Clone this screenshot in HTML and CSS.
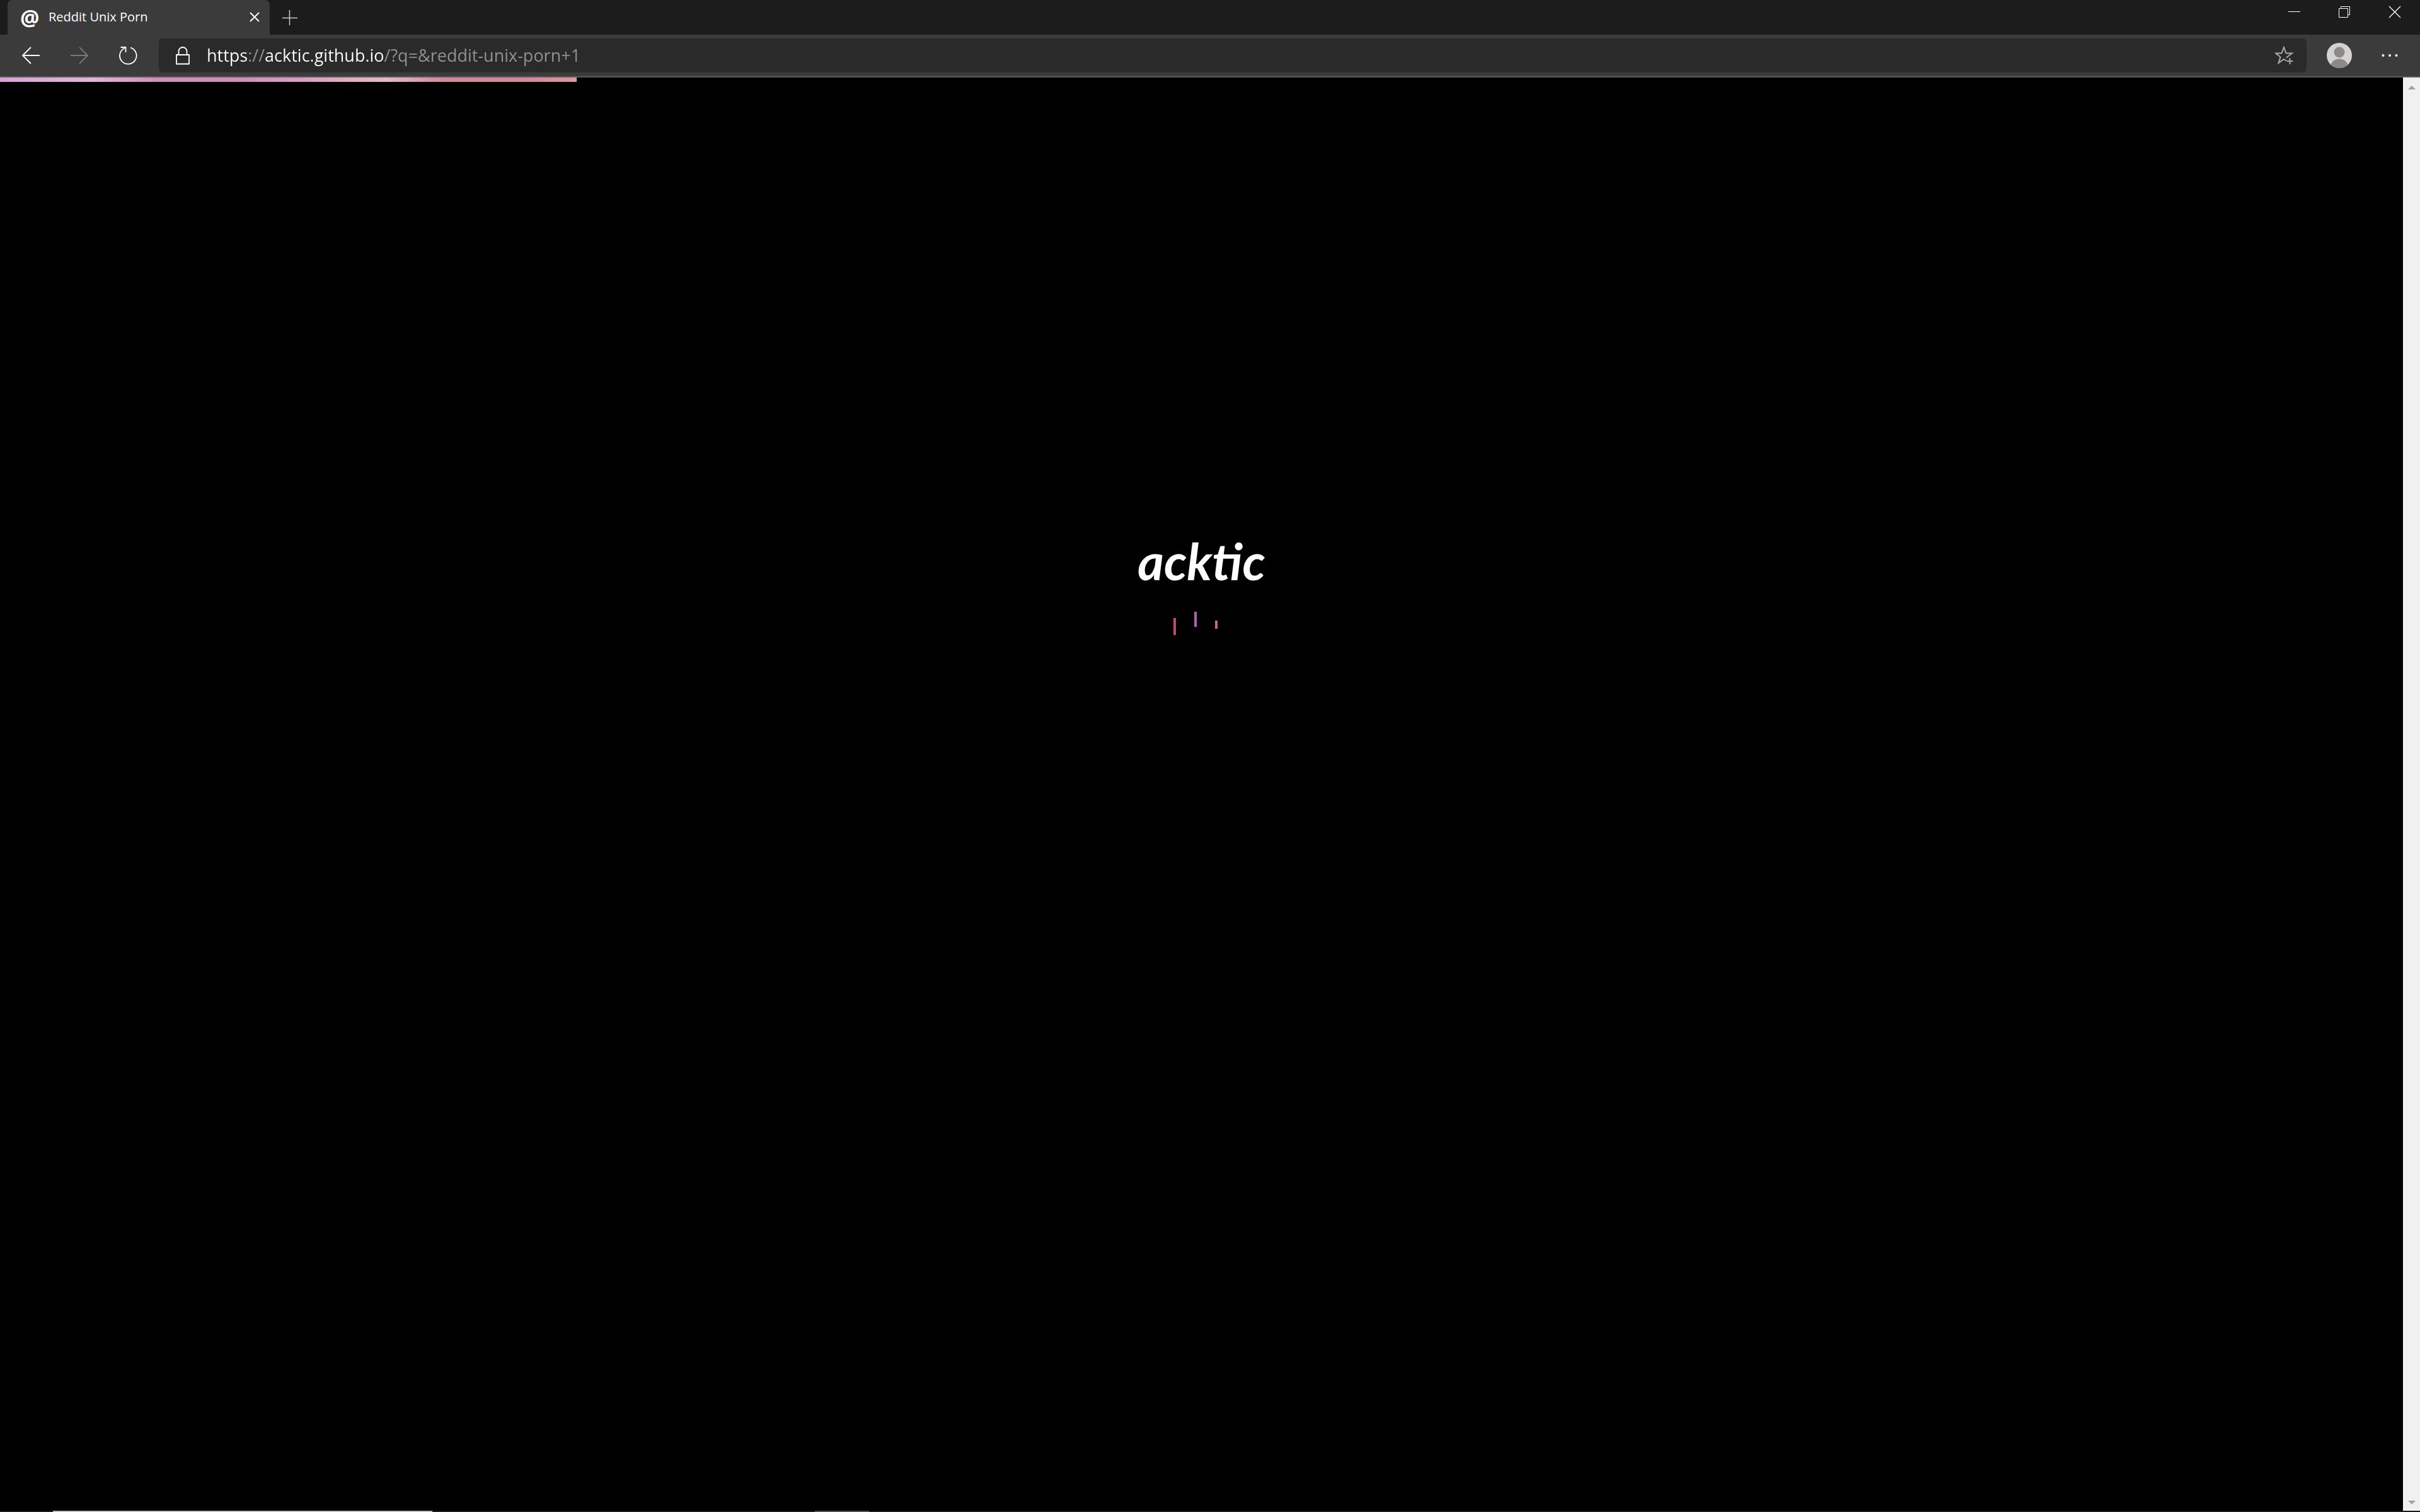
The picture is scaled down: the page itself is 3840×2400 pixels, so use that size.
FILE: index.html
```html
<!DOCTYPE html>
<html lang="en">
<head>
<meta charset="utf-8">
<title>Reddit Unix Porn</title>
<link rel="stylesheet" href="styles.css">
</head>
<body>
<div class="window">
  <header class="tabstrip">
    <div class="tab">
      <span class="favicon" aria-hidden="true">@</span>
      <span class="tab-title">Reddit Unix Porn</span>
      <button class="icon-button" type="button" aria-label="Close tab">
        <svg width="16" height="16" viewBox="0 0 16 16"><path d="M1 1l14 14M15 1L1 15" stroke-width="2"/></svg>
      </button>
    </div>
    <button class="icon-button new-tab" type="button" aria-label="New tab">
      <svg width="24" height="24" viewBox="0 0 24 24"><path d="M11.500 0v24M0 12.500h24" stroke="#ccc" stroke-width="1.500"/></svg>
    </button>
    <div class="window-controls">
      <button class="icon-button" type="button" aria-label="Minimize">
        <svg width="20" height="20" viewBox="0 0 20 20"><path d="M1 9.500h19"/></svg>
      </button>
      <button class="icon-button" type="button" aria-label="Restore">
        <svg width="20" height="20" viewBox="0 0 20 20"><path d="M1.500 4.500h14v14h-14zM4.500 4.500v-3h14v13h-3"/></svg>
      </button>
      <button class="icon-button" type="button" aria-label="Close window">
        <svg width="20" height="20" viewBox="0 0 20 20"><path d="M1 1l18 18M19 1L1 19" stroke-width="1.300"/></svg>
      </button>
    </div>
  </header>
  <nav class="toolbar" aria-label="Browser">
    <div class="nav-buttons">
      <button class="icon-button" type="button" aria-label="Back">
        <svg width="30" height="30" viewBox="0 0 30 30"><path d="M15 2L2 15l13 13M2 15h27" stroke-width="1.800"/></svg>
      </button>
      <button class="icon-button" type="button" aria-label="Forward" disabled>
        <svg width="30" height="30" viewBox="0 0 30 30"><path d="M15 2l13 13-13 13M28 15H1" stroke="#777" stroke-width="1.800"/></svg>
      </button>
      <button class="icon-button" type="button" aria-label="Refresh">
        <svg width="30" height="30" viewBox="0 0 30 30"><path d="M19 2.600A13.300 13.300 0 1 1 10 3.200M3.500 2h8v8" stroke-width="1.800"/></svg>
      </button>
    </div>
    <form class="address">
      <svg width="24" height="30" viewBox="0 0 24 30"><path d="M2 14h20v14.500H2zM5.500 14V8.500a6.500 6.500 0 0 1 13 0V14" stroke-width="1.800"/></svg>
      <input class="url" type="text" aria-label="Address" value="https://acktic.github.io/?q=&amp;reddit-unix-porn+1">
      <button class="icon-button" type="button" aria-label="Add to favorites">
        <svg class="star" width="30" height="30" viewBox="0 0 30 30"><path d="M18 18.500l5-4L27 11.500H17.500L14 2l-3.500 9.500H1l7.500 6L5.500 27l8.500-6 4 2.500M23.500 19v10M18.500 24h10"/></svg>
      </button>
    </form>
    <button class="icon-button" type="button" aria-label="Profile">
      <svg width="40" height="40" viewBox="0 0 40 40">
        <defs><clipPath id="disc"><circle cx="20" cy="20" r="20"/></clipPath></defs>
        <g clip-path="url(#disc)" stroke="none"><rect width="40" height="40" fill="#d4d3d1"/><circle cx="20" cy="15" r="8.500" fill="#8b8a88"/><ellipse cx="20" cy="38" rx="14" ry="12.500" fill="#8b8a88"/></g>
      </svg>
    </button>
    <button class="icon-button menu" type="button" aria-label="Settings and more">
      <svg width="26" height="6" viewBox="0 0 26 6"><g fill="#fff" stroke="none"><circle cx="2.500" cy="3" r="2"/><circle cx="13" cy="3" r="2"/><circle cx="23.500" cy="3" r="2"/></g></svg>
    </button>
  </nav>
  <div class="viewport">
    <main class="page">
      <div class="progress"></div>
      <div class="splash">
        <h1 class="wordmark">acktic</h1>
        <div class="loader" aria-hidden="true"><i class="bar bar-rose"></i><i class="bar bar-violet"></i><i class="bar bar-pink"></i></div>
      </div>
    </main>
    <div class="scrollbar" aria-hidden="true">
      <svg width="12" height="8" viewBox="0 0 12 8"><path d="M0 7l6-6 6 6z"/></svg>
      <svg width="12" height="8" viewBox="0 0 12 8"><path d="M0 1l6 6 6-6z"/></svg>
    </div>
  </div>
  <footer class="taskbar"><span class="task task-active"></span><span class="task"></span></footer>
</div>
</body>
</html>
```
FILE: styles.css
```css
* { box-sizing: border-box; }
body {
  margin: 0;
  background: #000;
  color: #fff;
  font-family: "Open Sans", "Noto Sans", sans-serif;
}
svg { display: block; flex: none; fill: none; stroke: #fff; }
.window { display: flex; flex-direction: column; min-height: 100vh; }
.icon-button { display: flex; padding: 0; border: 0; background: none; }

.tabstrip { display: flex; height: 55px; background: #1c1c1c; padding-left: 12px; }
.tab {
  display: flex;
  align-items: center;
  width: 416px;
  padding: 0 16px 2px 20px;
  background: #3b3b3b;
  border-radius: 8px 8px 0 0;
}
.favicon { width: 28px; margin-right: 17px; font-size: 34px; line-height: 40px; font-weight: 700; }
.tab-title { flex: 1; font-size: 20px; line-height: 32px; white-space: nowrap; }
.new-tab { align-self: center; margin-left: 20px; }
.window-controls { display: flex; gap: 60px; margin: 9px 30px 0 auto; }

.toolbar {
  display: flex;
  align-items: center;
  height: 68px;
  padding: 0 35px 0 34px;
  background: #3b3b3b;
  border-bottom: 2px solid #5c5c5c;
}
.nav-buttons { display: flex; gap: 47px; margin-right: 34px; }
.address {
  display: flex;
  flex: 1;
  align-items: center;
  height: 54px;
  margin-right: 32px;
  padding: 0 20px 0 26px;
  background: #2a2a2a;
  border-radius: 6px;
}
.url {
  flex: 1;
  margin: 0 0 0 26px;
  padding: 0;
  border: 0;
  outline: 0;
  font: 27px/40px "Open Sans", "Noto Sans", sans-serif;
  color: #fff;
  background: linear-gradient(90deg, #fff 65px, #929292 65px 92px, #fff 92px 282px, #929292 282px);
  -webkit-background-clip: text;
  background-clip: text;
  -webkit-text-fill-color: transparent;
}
.star { stroke: #aaa; stroke-width: 2; }
.menu { margin-left: 47px; }

.viewport { display: flex; flex: 1; }
.page { flex: 1; }
.progress {
  width: 24%;
  height: 7px;
  background: linear-gradient(90deg, #dc9fdc 0%, #e4b4dc 16%, #d98abf 27%, #d98abb 42%, #e6b8c8 67%, #dc8499 77%, #dc8499 92%, #e095a0 100%);
}
.splash { display: flex; flex-direction: column; align-items: center; padding-top: 700px; }
.wordmark {
  margin: 0;
  font: italic 700 80px/120px Lato, "Open Sans", sans-serif;
}
.loader { display: flex; gap: 29px; margin: 21px 20px 0 0; }
.bar { width: 4px; }
.bar-rose { height: 27px; margin-top: 10px; background: #b95068; }
.bar-violet { height: 24px; background: #b55fb0; }
.bar-pink { height: 13px; margin-top: 14px; background: #cc6787; }

.scrollbar {
  display: flex;
  flex-direction: column;
  justify-content: space-between;
  align-items: center;
  width: 27px;
  padding: 12px 0 9px;
  background: #f0f0f0;
}
.scrollbar svg { fill: #a0a0a0; stroke: none; }

.taskbar { display: flex; gap: 607px; height: 2px; padding-left: 84px; background: #1c1a1c; }
.task { width: 86px; background: #505050; }
.task-active { width: 602px; background: #c0bebe; }
```
